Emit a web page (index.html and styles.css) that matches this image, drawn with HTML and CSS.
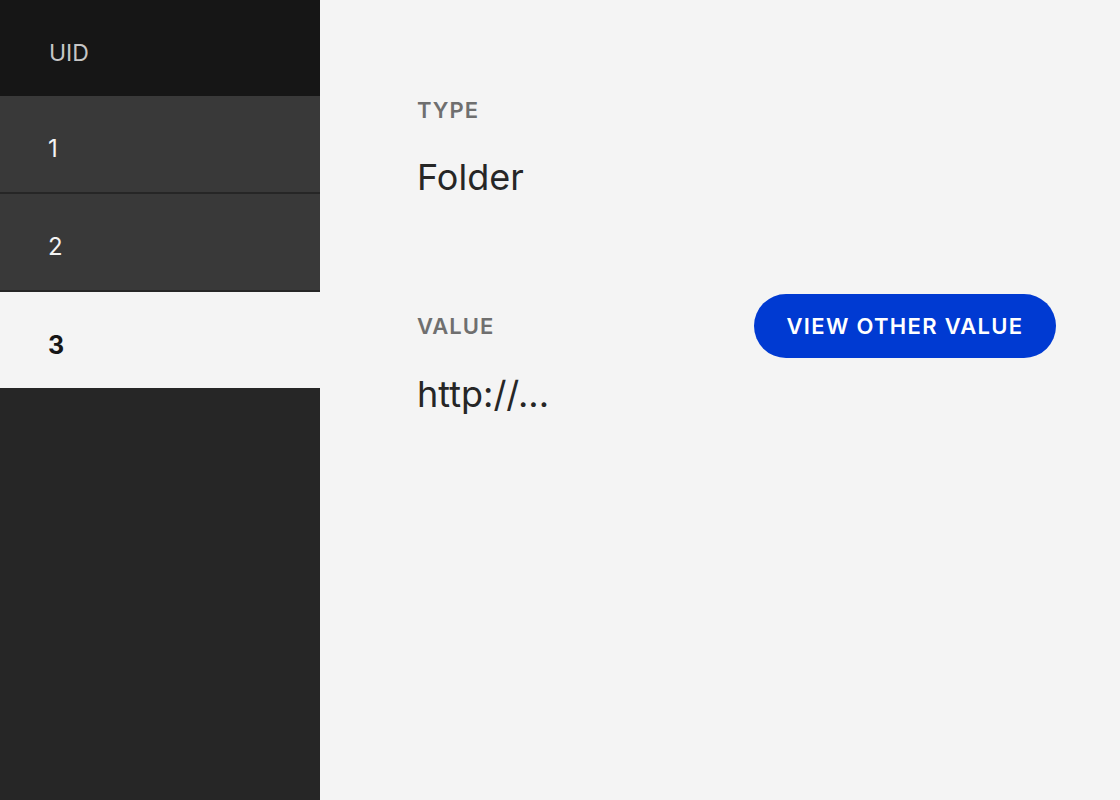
FILE: index.html
```html
<!DOCTYPE html>
<html lang="en">
<head>
<meta charset="utf-8">
<title>Details</title>
<link rel="stylesheet" href="styles.css">
</head>
<body>
<div class="app">
  <aside class="sidebar">
    <div class="sidebar-header">UID</div>
    <div class="row">1</div>
    <div class="row">2</div>
    <div class="row row-selected">3</div>
  </aside>
  <main class="main">
    <section class="field field-type">
      <div class="label">TYPE</div>
      <div class="value">Folder</div>
    </section>
    <section class="field field-value">
      <div class="field-head">
        <div class="label">VALUE</div>
        <button class="btn">VIEW OTHER VALUE</button>
      </div>
      <div class="value">http://...</div>
    </section>
  </main>
</div>
</body>
</html>
```
FILE: styles.css
```css
* { box-sizing: border-box; }
html, body { margin: 0; padding: 0; }
body {
  font-family: Inter, "Noto Sans", "Liberation Sans", sans-serif;
  background: #f4f4f4;
}
.app {
  display: flex;
  width: 1120px;
  height: 800px;
}
.sidebar {
  width: 320px;
  flex: 0 0 320px;
  background: #262626;
  display: flex;
  flex-direction: column;
}
.sidebar-header {
  height: 96px;
  background: #161616;
  color: #c6c6c6;
  font-size: 23px;
  padding: 10px 0 0 49px;
  display: flex;
  align-items: center;
}
.row {
  height: 98px;
  background: #393939;
  color: #f4f4f4;
  font-size: 24px;
  padding: 9px 0 0 48px;
  display: flex;
  align-items: center;
  border-bottom: 2px solid #262626;
}
.row-selected {
  background: #f4f4f4;
  color: #161616;
  font-weight: 700;
  font-size: 25px;
  height: 96px;
  border-bottom: none;
}
.main {
  flex: 1;
  padding: 96px 64px 0 97px;
}
.label {
  color: #6f6f6f;
  font-size: 22px;
  font-weight: 600;
  letter-spacing: 1px;
  line-height: 28px;
}
.value {
  color: #262626;
  font-size: 36px;
  line-height: 44px;
}
.field-type .value {
  margin-top: 31px;
}
.field-value {
  margin-top: 95px;
}
.field-head {
  display: flex;
  justify-content: space-between;
  align-items: center;
  height: 64px;
}
.field-value .value {
  margin-top: 14px;
}
.btn {
  height: 64px;
  width: 302px;
  border: none;
  border-radius: 32px;
  background: #003ad2;
  color: #ffffff;
  font-family: inherit;
  font-size: 22px;
  font-weight: 600;
  letter-spacing: 1.3px;
  padding: 0;
}
```
